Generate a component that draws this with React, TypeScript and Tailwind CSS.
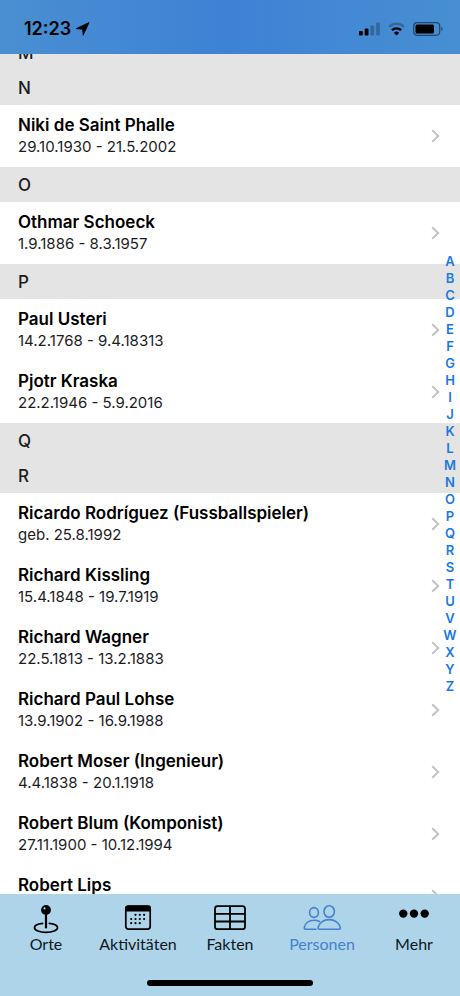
import { useState } from 'react'

type Person = {
  name: string
  dates: string
}

type Section = {
  letter: string
  people: Person[]
}

const sections: Section[] = [
  { letter: 'M', people: [] },
  { letter: 'N', people: [{ name: 'Niki de Saint Phalle', dates: '29.10.1930 - 21.5.2002' }] },
  { letter: 'O', people: [{ name: 'Othmar Schoeck', dates: '1.9.1886 - 8.3.1957' }] },
  {
    letter: 'P',
    people: [
      { name: 'Paul Usteri', dates: '14.2.1768 - 9.4.18313' },
      { name: 'Pjotr Kraska', dates: '22.2.1946 - 5.9.2016' },
    ],
  },
  { letter: 'Q', people: [] },
  {
    letter: 'R',
    people: [
      { name: 'Ricardo Rodríguez (Fussballspieler)', dates: 'geb. 25.8.1992' },
      { name: 'Richard Kissling', dates: '15.4.1848 - 19.7.1919' },
      { name: 'Richard Wagner', dates: '22.5.1813 - 13.2.1883' },
      { name: 'Richard Paul Lohse', dates: '13.9.1902 - 16.9.1988' },
      { name: 'Robert Moser (Ingenieur)', dates: '4.4.1838 - 20.1.1918' },
      { name: 'Robert Blum (Komponist)', dates: '27.11.1900 - 10.12.1994' },
      { name: 'Robert Lips', dates: '' },
    ],
  },
]

const alphabet = 'ABCDEFGHIJKLMNOPQRSTUVWXYZ'.split('')

const calendarDots = [
  [11.5, 10.8], [15.8, 10.8], [20.1, 10.8],
  [7.2, 15], [11.5, 15], [15.8, 15], [20.1, 15],
  [7.2, 19.2], [11.5, 19.2], [15.8, 19.2],
]

function PinIcon() {
  return (
    <svg width="28" height="30" viewBox="0 0 28 30" fill="none" stroke="black" strokeWidth="1.8">
      <path d="M10.6 19.3C5.8 19.8 2.5 21.5 2.5 23.7c0 2.7 5.1 4.600 11.5 4.600s11.500-1.900 11.500-4.600c0-2.200-3.300-3.900-8.100-4.400" strokeLinecap="round" />
      <path d="M14 9v14.500" strokeWidth="2.200" strokeLinecap="round" />
      <circle cx="14" cy="6" r="4.900" fill="black" stroke="none" />
      <circle cx="12.500" cy="4.400" r="1.100" fill="#add4e8" stroke="none" />
    </svg>
  )
}

function CalendarIcon() {
  return (
    <svg width="28" height="30" viewBox="0 0 28 30" fill="black">
      <rect x="1.800" y="2.200" width="24.400" height="23" rx="2.600" fill="none" stroke="black" strokeWidth="1.700" />
      <path d="M1 7.500V4.400a3 3 0 0 1 3-3h20a3 3 0 0 1 3 3v3.100z" />
      {calendarDots.map(([x, y]) => (
        <circle key={`${x}-${y}`} cx={x} cy={y} r="1.100" />
      ))}
    </svg>
  )
}

function TableIcon() {
  return (
    <svg width="34" height="30" viewBox="0 0 34 30" fill="none" stroke="black" strokeWidth="1.800">
      <rect x="2" y="2.200" width="30" height="23" rx="2.500" />
      <path d="M2 9.900h30M2 17.500h30M17 2.200v23" />
    </svg>
  )
}

function PeopleIcon() {
  return (
    <svg width="40" height="30" viewBox="0 0 40 30" fill="none" stroke="currentColor" strokeWidth="1.600" strokeLinejoin="round" strokeLinecap="round">
      <ellipse cx="12" cy="8.500" rx="4.400" ry="4.900" />
      <ellipse cx="27.200" cy="7.500" rx="5.200" ry="5.800" />
      <path d="M14 25.200H3.600c-1 0-1.500-.6-1.300-1.700.8-4.200 4.600-7.300 9.700-7.300 2.100 0 3.900.5 5.400 1.300" />
      <path d="M17.400 25.200c-1 0-1.500-.7-1.300-1.600.9-4.500 5.400-8 11.100-8s10.200 3.500 11.100 8c.2.900-.3 1.600-1.300 1.600z" />
    </svg>
  )
}

function MoreIcon() {
  return (
    <svg width="32" height="30" viewBox="0 0 32 30" fill="black">
      <circle cx="5.300" cy="9.600" r="4.200" />
      <circle cx="16" cy="9.600" r="4.200" />
      <circle cx="26.700" cy="9.600" r="4.200" />
    </svg>
  )
}

const tabs = [
  { label: 'Orte', Icon: PinIcon },
  { label: 'Aktivitäten', Icon: CalendarIcon },
  { label: 'Fakten', Icon: TableIcon },
  { label: 'Personen', Icon: PeopleIcon },
  { label: 'Mehr', Icon: MoreIcon },
]

function StatusBar() {
  return (
    <header className="flex shrink-0 items-center justify-between bg-linear-to-r from-[#498fd1] via-[#3e82d5] to-[#478fd2] pt-4 pr-4 pb-3 pl-6 text-black">
      <div className="flex items-center gap-1">
        <span className="text-lg leading-[26px] font-semibold">12:23</span>
        <svg width="15" height="14" viewBox="0 0 15 14" fill="currentColor">
          <path d="M14 .6 8.200 13.300 7.600 7.300 1.200 6.600z" stroke="currentColor" strokeWidth=".8" strokeLinejoin="round" />
        </svg>
      </div>
      <div className="flex items-center gap-2">
        <svg width="21" height="14" viewBox="0 0 21 14" fill="currentColor">
          <rect x="0" y="9" width="3.800" height="4.500" rx="1" />
          <rect x="5.700" y="6.500" width="3.800" height="7" rx="1" />
          <rect x="11.400" y="3.500" width="3.800" height="10" rx="1" opacity=".25" />
          <rect x="17.100" y=".5" width="3.800" height="13" rx="1" opacity=".25" />
        </svg>
        <svg width="17" height="14" viewBox="0 0 17 14" fill="none" stroke="currentColor" strokeWidth="2.400">
          <path d="M1 4.800a10.800 10.800 0 0 1 15 0" opacity=".25" />
          <path d="M3.900 8.200a6.700 6.700 0 0 1 9.200 0" />
          <path d="M8.500 13.500 5.900 10.900a3.700 3.700 0 0 1 5.200 0z" fill="currentColor" stroke="none" />
        </svg>
        <svg width="31" height="14" viewBox="0 0 31 14" fill="currentColor">
          <rect x=".7" y=".7" width="26" height="12.600" rx="3.500" fill="none" stroke="currentColor" strokeWidth="1.200" opacity=".5" />
          <rect x="2.500" y="2.500" width="18.500" height="9" rx="1.500" />
          <path d="M28.300 4.800v4.400c1.700-.6 1.700-3.800 0-4.400z" opacity=".5" />
        </svg>
      </div>
    </header>
  )
}

function PersonRow({ name, dates }: Person) {
  return (
    <li>
      <a href="#" className="flex h-[62px] items-center justify-between pr-5 pl-[18px]">
        <span className="flex flex-col pb-0.5">
          <span className="text-[17px] leading-6 font-semibold text-black">{name}</span>
          <span className="h-5 text-[15px] leading-5 text-[#1c1c1e]">{dates}</span>
        </span>
        <svg width="9" height="14" viewBox="0 0 9 14" fill="none" stroke="#c2c2c4" strokeWidth="2">
          <path d="m1.200 1.200 6 5.800-6 5.800" />
        </svg>
      </a>
    </li>
  )
}

export default function App() {
  const [active, setActive] = useState('Personen')

  return (
    <div className="flex h-screen flex-col bg-white font-['Inter','Liberation_Sans',sans-serif]">
      <StatusBar />

      <main className="relative min-h-0 flex-1 overflow-hidden">
        {/* the list is scrolled a little way into the M section */}
        <div className="-mt-[19px]">
          {sections.map((section) => (
            <section key={section.letter}>
              <h2 className="bg-[#e4e4e4] pt-0.5 pb-px pl-[18px] text-[17px] leading-8 font-medium text-[#1c1c1e]">
                {section.letter}
              </h2>
              <ul>
                {section.people.map((person) => (
                  <PersonRow key={person.name} {...person} />
                ))}
              </ul>
            </section>
          ))}
        </div>

        {/* alphabet index */}
        <nav className="absolute inset-y-0 right-0 flex w-5 flex-col items-center justify-center text-[13px] leading-[17px] font-semibold text-[#1a78e6]">
          {alphabet.map((letter) => (
            <a key={letter} href="#">
              {letter}
            </a>
          ))}
        </nav>
      </main>

      <footer className="shrink-0 bg-[#add4e8] pt-2.5 pb-2.5 text-black">
        <nav className="flex font-['Lato',sans-serif]">
          {tabs.map(({ label, Icon }) => (
            <button
              key={label}
              onClick={() => setActive(label)}
              className={`flex flex-1 basis-0 flex-col items-center text-base leading-5 ${
                active === label ? 'text-[#4780cf]' : 'text-[#10181e]'
              }`}
            >
              <Icon />
              {label}
            </button>
          ))}
        </nav>
        <div className="mx-auto mt-[26px] h-1.5 w-[36%] rounded-full bg-black" />
      </footer>
    </div>
  )
}
